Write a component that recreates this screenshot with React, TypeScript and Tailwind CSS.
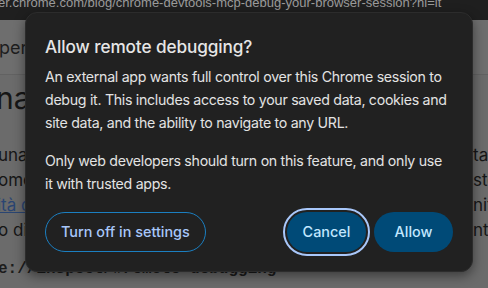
import React from "react";

export default function App() {
  const rows: { left: string; right: string; link?: boolean }[] = [
    { left: "una", right: "ta" },
    { left: "ome", right: "ste" },
    { left: "ità d", right: "nit", link: true },
    { left: "o dis", right: "nt" },
  ];
  return (
    <div
      className="relative w-[488px] h-[288px] overflow-hidden bg-[#6b6b6b]"
      style={{ fontFamily: "Inter, 'Noto Sans', sans-serif" }}
    >
      {/* URL bar */}
      <div className="h-[20px] bg-[#1f1f1f] overflow-hidden">
        <div className="-mt-[6px] -ml-[2px] whitespace-nowrap text-[13px] leading-[18px] text-[#9b9b9b]" style={{ fontFamily: "'Liberation Sans', Arial, sans-serif" }}>
          er.chrome.com/blog/chrome-devtools-mcp-debug-your-browser-session?hl=it
        </div>
      </div>
      {/* page header */}
      <div className="h-[55px] bg-[#6e6e6e] border-b border-[#626262] flex items-center overflow-hidden">
        <span className="-ml-[1px] text-[18px] text-[#1e1e1e] whitespace-nowrap">per</span>
      </div>
      {/* page body */}
      <div className="pt-[2px] text-[#161616]">
        <div className="h-[42px] -ml-[4px] text-[30px] leading-[42px] whitespace-nowrap">na</div>
        <div className="mt-[24px] flex flex-col">
          {rows.map((r) => (
            <div key={r.left} className="h-[25px] flex justify-between items-center text-[17px] whitespace-nowrap overflow-hidden">
              <span className={r.link ? "-ml-[3px] text-[#2a4572] underline" : "-ml-[2px]"}>{r.left}</span>
              <span className="w-[15px] overflow-hidden">{r.right}</span>
            </div>
          ))}
          <div className="mt-[14px] -ml-[2px] h-[20px] text-[16px] font-bold text-[#1c1c1c] whitespace-nowrap" style={{ fontFamily: "'Liberation Mono', monospace" }}>
            e://inspect/#remote-debugging
          </div>
        </div>
      </div>

      {/* Dialog */}
      <div className="absolute left-[25px] top-[12px] w-[448px] h-[260px] rounded-[12px] bg-[#212121] border border-[#2c2c2c] shadow-[0_4px_12px_rgba(0,0,0,0.45)] px-[19px] pt-[22px] text-[#e3e3e3]">
        <h1 className="text-[17.2px] leading-6 font-medium tracking-[-0.1px] text-[#e6e6e6]">Allow remote debugging?</h1>
        <p className="mt-[6px] text-[14.2px] leading-[23px] tracking-[-0.3px]">
          An external app wants full control over this Chrome session to debug it. This includes access to your saved data, cookies and site data, and the ability to navigate to any URL.
        </p>
        <p className="mt-[15px] text-[14.2px] leading-[23px] tracking-[-0.3px]">
          Only web developers should turn on this feature, and only use it with trusted apps.
        </p>
        <div className="mt-[17px] flex items-center">
          <button className="h-10 px-[15px] rounded-full border border-[#1b7fc1] text-[14.4px] font-medium text-[#a8c7fa]">
            Turn off in settings
          </button>
          <div className="flex-1" />
          <button className="h-10 min-w-[79px] px-[15px] rounded-full bg-[#004a77] text-[14.4px] font-medium text-[#c2e7ff] outline-2 outline-offset-2 outline-[#a8c7fa]">
            Cancel
          </button>
          <button className="ml-2 h-10 min-w-[79px] px-[15px] rounded-full bg-[#004a77] text-[14.4px] font-medium text-[#c2e7ff]">
            Allow
          </button>
        </div>
      </div>
    </div>
  );
}
